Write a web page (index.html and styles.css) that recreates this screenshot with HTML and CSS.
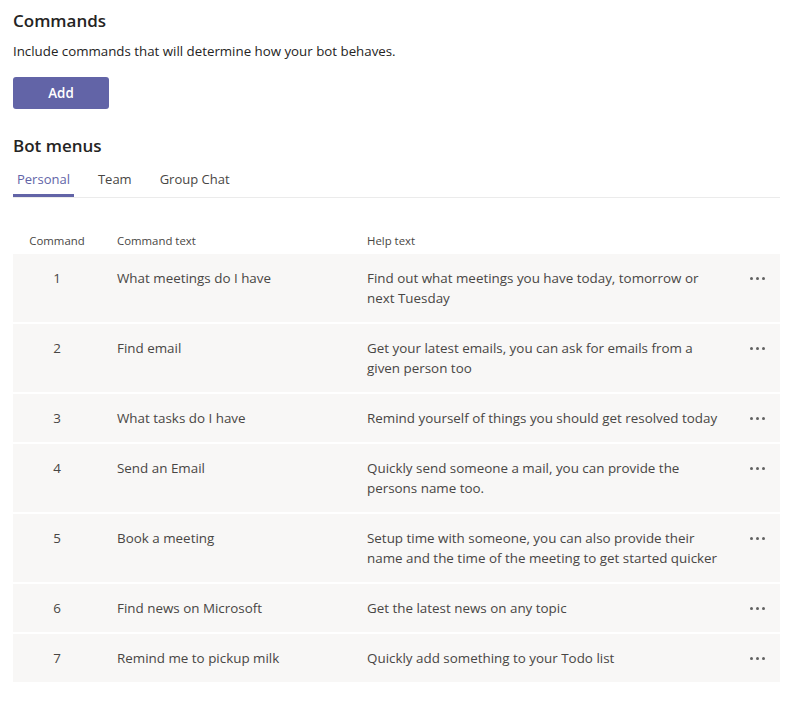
FILE: index.html
```html
<!DOCTYPE html>
<html>
<head>
<meta charset="utf-8">
<link rel="stylesheet" href="styles.css">
</head>
<body>
<div class="page">
  <h2 class="title">Commands</h2>
  <p class="desc">Include commands that will determine how your bot behaves.</p>
  <button class="btn">Add</button>
  <h2 class="title title-menus">Bot menus</h2>
  <div class="tabs">
    <div class="tab active">Personal</div>
    <div class="tab">Team</div>
    <div class="tab">Group Chat</div>
  </div>
  <div class="table">
    <div class="thead">
      <div class="c-num">Command</div>
      <div class="c-text">Command text</div>
      <div class="c-help">Help text</div>
    </div>
    <div class="row"><div class="c-num">1</div><div class="c-text">What meetings do I have</div><div class="c-help">Find out what meetings you have today, tomorrow or next Tuesday</div><div class="c-more"><span class="dots"><i></i><i></i><i></i></span></div></div>
    <div class="row"><div class="c-num">2</div><div class="c-text">Find email</div><div class="c-help">Get your latest emails, you can ask for emails from a given person too</div><div class="c-more"><span class="dots"><i></i><i></i><i></i></span></div></div>
    <div class="row"><div class="c-num">3</div><div class="c-text">What tasks do I have</div><div class="c-help">Remind yourself of things you should get resolved today</div><div class="c-more"><span class="dots"><i></i><i></i><i></i></span></div></div>
    <div class="row"><div class="c-num">4</div><div class="c-text">Send an Email</div><div class="c-help">Quickly send someone a mail, you can provide the persons name too.</div><div class="c-more"><span class="dots"><i></i><i></i><i></i></span></div></div>
    <div class="row"><div class="c-num">5</div><div class="c-text">Book a meeting</div><div class="c-help">Setup time with someone, you can also provide their name and the time of the meeting to get started quicker</div><div class="c-more"><span class="dots"><i></i><i></i><i></i></span></div></div>
    <div class="row"><div class="c-num">6</div><div class="c-text">Find news on Microsoft</div><div class="c-help">Get the latest news on any topic</div><div class="c-more"><span class="dots"><i></i><i></i><i></i></span></div></div>
    <div class="row"><div class="c-num">7</div><div class="c-text">Remind me to pickup milk</div><div class="c-help">Quickly add something to your Todo list</div><div class="c-more"><span class="dots"><i></i><i></i><i></i></span></div></div>
  </div>
</div>
</body>
</html>
```
FILE: styles.css
```css
* { box-sizing: border-box; }
html, body { margin: 0; padding: 0; background: #fff; }
body {
  font-family: "Open Sans", "Noto Sans", sans-serif;
  color: #252423;
  font-size: 13.4px;
}
.page {
  padding: 9px 18px 0 13px;
}
.title {
  margin: 0;
  font-size: 17px;
  font-weight: 600;
  line-height: 24px;
  color: #252423;
}
.desc {
  margin: 8px 0 0;
  font-size: 13.3px;
  line-height: 20px;
  color: #252423;
}
.btn {
  margin-top: 16px;
  width: 96px;
  height: 32px;
  border: 0;
  border-radius: 3px;
  background: #6264a7;
  color: #fff;
  font-family: inherit;
  font-size: 13.4px;
  font-weight: 600;
  display: block;
  padding: 0;
}
.title-menus {
  margin-top: 25px;
}
.tabs {
  display: flex;
  margin-top: 9px;
  border-bottom: 1px solid #ebebeb;
  height: 31px;
}
.tab {
  padding: 0 4px;
  margin-right: 20px;
  font-size: 13px;
  line-height: 24px;
  color: #484644;
  height: 30px;
}
.tab.active {
  color: #6264a7;
  border-bottom: 3px solid #6264a7;
}
.table {
  margin-top: 35px;
}
.thead, .row {
  display: grid;
  grid-template-columns: 88px 250px 384px 45px;
}
.thead {
  font-size: 11.4px;
  line-height: 16px;
  color: #484644;
  height: 21px;
}
.row {
  background: #f8f7f6;
  margin-bottom: 2px;
  padding: 14px 0;
  font-size: 13.4px;
  line-height: 20px;
  color: #484644;
}
.c-num { text-align: center; }
.c-text { padding-left: 16px; }
.c-help { padding-left: 16px; padding-right: 16px; }
.c-more { display: flex; justify-content: center; padding-top: 9px; }
.dots { display: flex; gap: 3px; height: 3px; }
.dots i { width: 3px; height: 3px; background: #616161; border-radius: 50%; display: block; }
```
